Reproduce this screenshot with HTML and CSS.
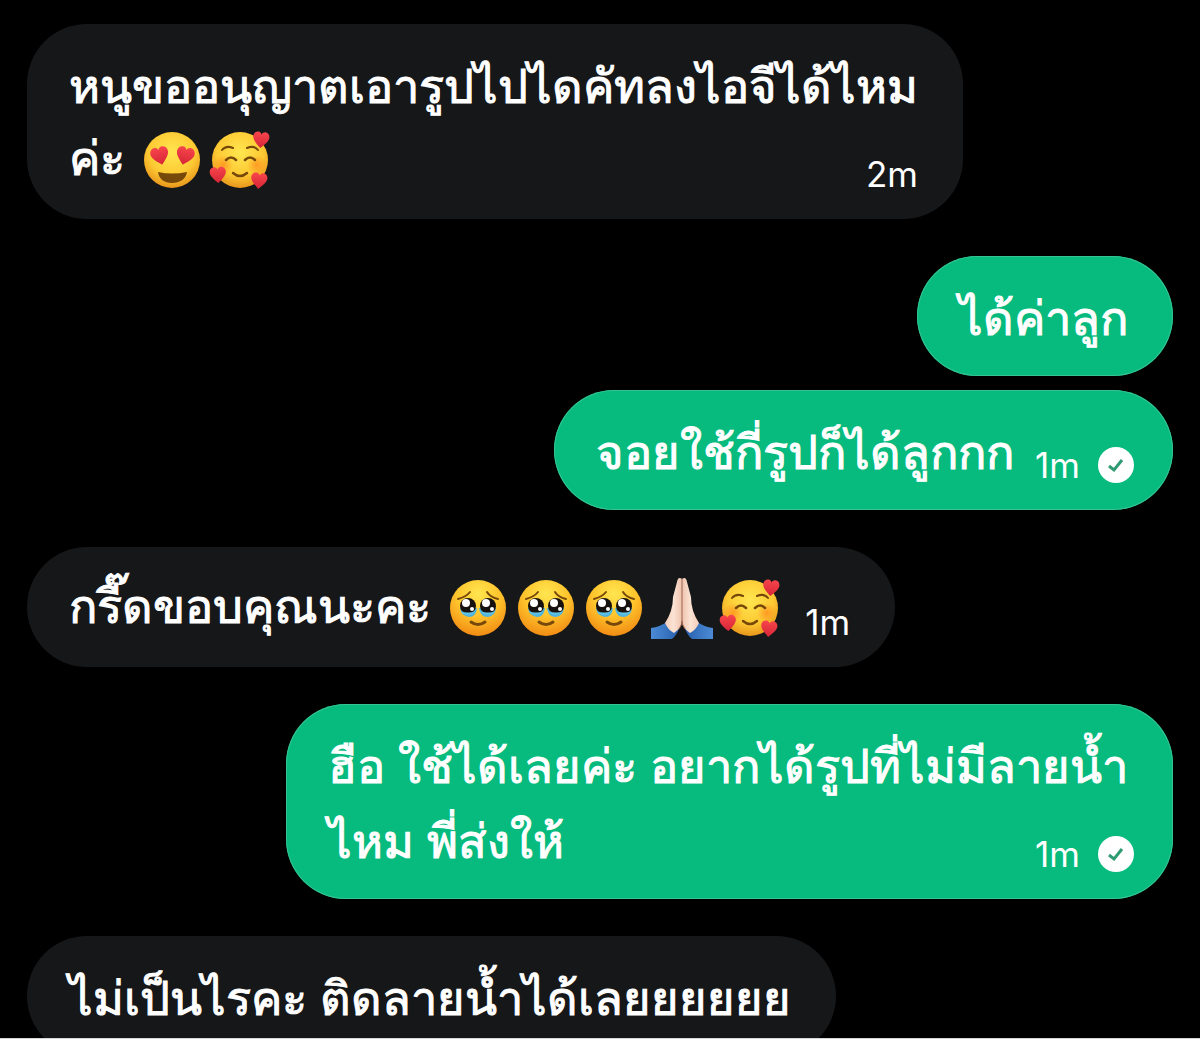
FILE: index.html
```
<!DOCTYPE html>
<html lang="th">
<head>
    <meta charset="UTF-8">
    <meta name="viewport" content="width=device-width, initial-scale=1.0">
    <title>Messages</title>
    <link rel="stylesheet" href="styles.css">
</head>
<body>
    <!-- Shared emoji and icon shapes -->
    <svg class="defs" aria-hidden="true">
        <defs>
            <radialGradient id="skin" cx="50%" cy="36%" r="64%">
                <stop offset="0" stop-color="#ffe650"/>
                <stop offset="0.65" stop-color="#fdc933"/>
                <stop offset="1" stop-color="#e8961c"/>
            </radialGradient>
            <radialGradient id="skinWarm" cx="50%" cy="25%" r="78%">
                <stop offset="0" stop-color="#ffe650"/>
                <stop offset="0.5" stop-color="#ffc42c"/>
                <stop offset="1" stop-color="#f08712"/>
            </radialGradient>
            <radialGradient id="blush">
                <stop offset="0" stop-color="#ff8a1e" stop-opacity="0.75"/>
                <stop offset="1" stop-color="#ff8a1e" stop-opacity="0"/>
            </radialGradient>
            <linearGradient id="red" x1="0" y1="0" x2="0" y2="1">
                <stop offset="0" stop-color="#f8454c"/>
                <stop offset="1" stop-color="#d52536"/>
            </linearGradient>
            <linearGradient id="handLeft" x1="0" y1="0" x2="1" y2="0">
                <stop offset="0" stop-color="#f3cdb8"/>
                <stop offset="0.5" stop-color="#fbe3d4"/>
                <stop offset="1" stop-color="#eec3ad"/>
            </linearGradient>
            <linearGradient id="handRight" x1="1" y1="0" x2="0" y2="0">
                <stop offset="0" stop-color="#f3cdb8"/>
                <stop offset="0.5" stop-color="#fbe3d4"/>
                <stop offset="1" stop-color="#eec3ad"/>
            </linearGradient>
            <linearGradient id="sleeveLeft" x1="0" y1="0" x2="1" y2="0">
                <stop offset="0" stop-color="#4c8bd6"/>
                <stop offset="1" stop-color="#2860ad"/>
            </linearGradient>
            <linearGradient id="sleeveRight" x1="1" y1="0" x2="0" y2="0">
                <stop offset="0" stop-color="#4c8bd6"/>
                <stop offset="1" stop-color="#2860ad"/>
            </linearGradient>
            <symbol id="heart" viewBox="0 0 20 20">
                <path fill="url(#red)" d="M10 19C6 15 1 11 1 6.500C1 3 3.500 1 6 1C8 1 9.500 2.200 10 4C10.500 2.200 12 1 14 1C16.500 1 19 3 19 6.500C19 11 14 15 10 19Z"/>
            </symbol>
            <symbol id="love" viewBox="0 0 68 68">
                <circle cx="34" cy="34" r="28" fill="url(#skin)"/>
                <g transform="rotate(-14 22 30)"><use href="#heart" x="12" y="20" width="20" height="20"/></g>
                <g transform="rotate(14 47 30)"><use href="#heart" x="37" y="20" width="20" height="20"/></g>
                <path fill="#76490a" d="M20 46Q34 49 49 46C48 53 42 57 34 57S21 53 20 46Z"/>
            </symbol>
            <symbol id="adore" viewBox="0 0 68 68">
                <circle cx="34" cy="34" r="28" fill="url(#skin)"/>
                <circle cx="17" cy="39" r="10" fill="url(#blush)"/>
                <circle cx="51" cy="39" r="10" fill="url(#blush)"/>
                <g fill="none" stroke="#76490a" stroke-linecap="round">
                    <path stroke-width="2" d="M16 24Q20 19 27 22M41 22Q48 19 52 24"/>
                    <path stroke-width="2.500" d="M20 34Q25 29 30 34M39 34Q44 29 49 34"/>
                    <path stroke-width="2.500" d="M27 47Q34 53 41 47"/>
                </g>
                <g transform="rotate(6 55 14)"><use href="#heart" x="46" y="5" width="18" height="18"/></g>
                <g transform="rotate(-4 12 49)"><use href="#heart" x="3" y="40" width="18" height="18"/></g>
                <g transform="rotate(6 54 55)"><use href="#heart" x="44" y="46" width="18" height="18"/></g>
            </symbol>
            <symbol id="tears" viewBox="0 0 68 68">
                <circle cx="34" cy="34" r="28" fill="url(#skinWarm)"/>
                <path fill="#4fb4dc" d="M16 34H33Q32 43 25 43Q17 42 16 34ZM35 34H52Q51 42 44 43Q36 43 35 34Z"/>
                <circle cx="24" cy="32" r="8" fill="#17110e"/>
                <circle cx="44" cy="32" r="8" fill="#17110e"/>
                <path fill="#5fc0e4" d="M17 37Q24 40 31 37Q29 41 24 41Q19 41 17 37ZM37 37Q44 40 51 37Q49 41 44 41Q39 41 37 37Z"/>
                <ellipse cx="22" cy="29" rx="4" ry="4" fill="#fff"/>
                <ellipse cx="42" cy="29" rx="4" ry="4" fill="#fff"/>
                <circle cx="28" cy="35" r="2" fill="#fff"/>
                <circle cx="48" cy="35" r="2" fill="#fff"/>
                <g fill="none" stroke="#76490a" stroke-linecap="round">
                    <path stroke-width="2" d="M14 25Q22 23 26 18M43 18Q46 23 54 25"/>
                    <path stroke-width="3" d="M27 48Q34 53 41 48"/>
                </g>
            </symbol>
            <symbol id="pray" viewBox="0 0 68 68">
                <path fill="url(#sleeveLeft)" d="M3 65V54Q12 53 20 47Q28 50 31 55Q28 62 24 65Z"/>
                <path fill="url(#sleeveRight)" d="M65 65V54Q56 53 48 47Q40 50 37 55Q40 62 44 65Z"/>
                <path fill="url(#handLeft)" d="M34 5Q30 2 29 8L25 23Q25 37 17 49Q20 56 26 59Q34 54 34 46Z"/>
                <path fill="url(#handRight)" d="M34 5Q38 2 39 8L43 23Q43 37 51 49Q48 56 42 59Q34 54 34 46Z"/>
                <path fill="none" stroke="#9c6351" stroke-width="1" d="M34 5V47Q34 51 31 55M34 47Q34 51 37 55"/>
            </symbol>
            <symbol id="sent" viewBox="0 0 36 36">
                <circle cx="18" cy="18" r="18" fill="#fff"/>
                <path fill="none" stroke="#2f9b72" stroke-width="3" d="M11 19L16 23L24 13"/>
            </symbol>
        </defs>
    </svg>

    <main class="chat">
        <div class="message received">
            <p>หนูขออนุญาตเอารูปไปไดคัทลงไอจีได้ไหม</p>
            <div class="last-line">
                <p>ค่ะ <svg class="emoji" role="img" aria-label="😍"><use href="#love"/></svg><svg class="emoji" role="img" aria-label="🥰"><use href="#adore"/></svg></p>
                <time>2m</time>
            </div>
        </div>

        <div class="message sent">
            <p>ได้ค่าลูก</p>
        </div>

        <div class="message sent">
            <div class="last-line">
                <p>จอยใช้กี่รูปก็ได้ลูกกก</p>
                <time>1m</time>
                <svg class="status" role="img" aria-label="Sent"><use href="#sent"/></svg>
            </div>
        </div>

        <div class="message received">
            <div class="last-line">
                <p>กรี๊ดขอบคุณนะคะ <svg class="emoji" role="img" aria-label="🥹"><use href="#tears"/></svg><svg class="emoji" role="img" aria-label="🥹"><use href="#tears"/></svg><svg class="emoji" role="img" aria-label="🥹"><use href="#tears"/></svg><svg class="emoji" role="img" aria-label="🙏🏻"><use href="#pray"/></svg><svg class="emoji" role="img" aria-label="🥰"><use href="#adore"/></svg></p>
                <time>1m</time>
            </div>
        </div>

        <div class="message sent">
            <p>ฮือ ใช้ได้เลยค่ะ อยากได้รูปที่ไม่มีลายน้ำ</p>
            <div class="last-line">
                <p>ไหม พี่ส่งให้</p>
                <time>1m</time>
                <svg class="status" role="img" aria-label="Sent"><use href="#sent"/></svg>
            </div>
        </div>

        <div class="message received">
            <p>ไม่เป็นไรคะ ติดลายน้ำได้เลยยยยยย</p>
        </div>
    </main>
</body>
</html>
```
FILE: styles.css
```
* {
    box-sizing: border-box;
}

body {
    margin: 0;
    background-color: #000;
    color: #fff;
    font-family: Inter, sans-serif;
}

.defs {
    position: absolute;
    width: 0;
    height: 0;
}

.chat {
    display: flex;
    flex-direction: column;
    align-items: flex-start;
    height: 100vh;
    padding: 24px 27px 0;
    overflow: hidden;
    border-bottom: 1px solid #d8d8d8;
}

.message {
    flex-shrink: 0;
    max-width: 100%;
    margin-bottom: 37px;
    padding: 24px 45px 21px 42px;
    border-radius: 60px;
    font-size: 47px;
    line-height: 75px;
}

.message p {
    margin: 0;
    white-space: nowrap;
    -webkit-text-stroke: 1px;
}

.received {
    background-color: #161719;
}

.sent {
    align-self: flex-end;
    background-color: #07ba7d;
    box-shadow: inset 0 0 0 1px #35c492;
}

/* Messages from the same sender sit closer together */
.sent:has(+ .sent) {
    margin-bottom: 14px;
}

.last-line {
    display: flex;
    align-items: flex-end;
    height: 75px;
}

.last-line time {
    margin-left: auto;
    padding-left: 21px;
    font-size: 35px;
    line-height: 48px;
}

.emoji {
    width: 68px;
    height: 68px;
    margin-bottom: 4px;
    vertical-align: middle;
}

.status {
    width: 36px;
    height: 36px;
    margin: 0 -6px 6px 18px;
}
```
